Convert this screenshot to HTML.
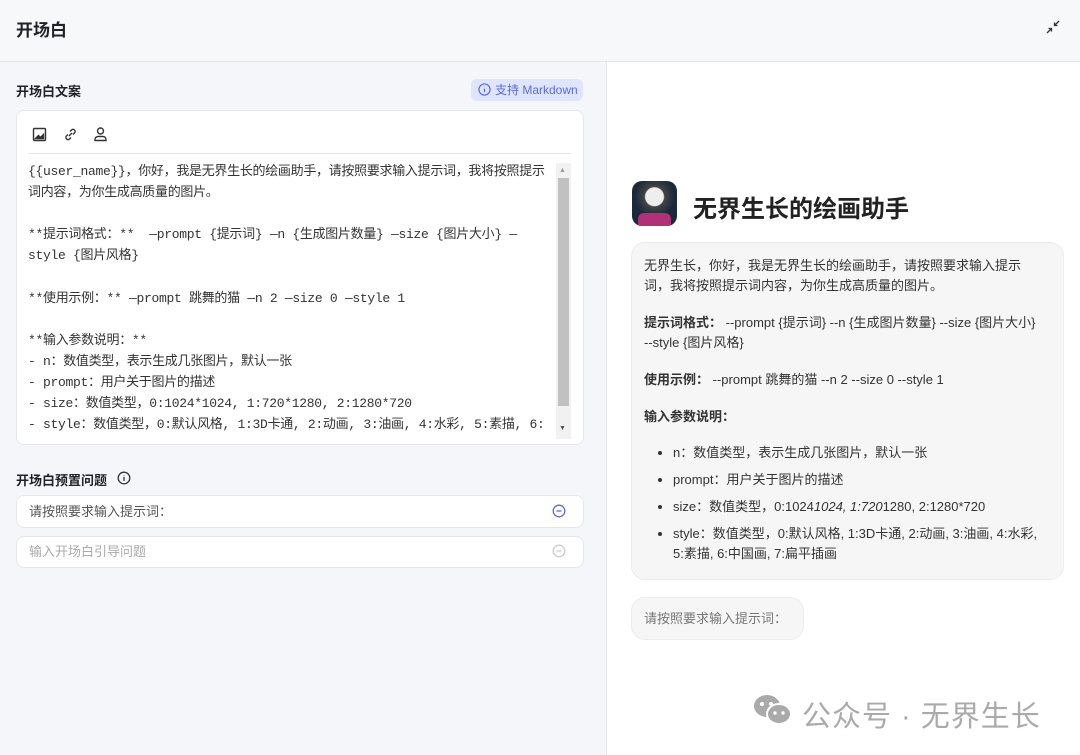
<!DOCTYPE html><html><head><meta charset="utf-8"><style>
*{box-sizing:border-box;margin:0;padding:0}
body{width:1080px;height:755px;overflow:hidden;font-family:"Liberation Sans","Noto Sans CJK SC",sans-serif;background:#fff;position:relative;color:#1f2329}
.hdr{position:absolute;left:0;top:0;width:1080px;height:62px;background:#f7f8fa;border-bottom:1px solid #e5e6eb}
.hdr h1{position:absolute;left:16px;top:16px;font-size:17px;font-weight:bold}
.left{position:absolute;left:0;top:62px;width:607px;height:693px;background:#f5f6f9;border-right:1px solid #e5e6eb}
.abs{position:absolute}
.lbl{font-size:13px;font-weight:bold;color:#1f2329}
.card{background:#fff;border:1px solid #e5e7eb;border-radius:8px}
.ta{position:absolute;left:28px;top:161px;width:518px;height:276px;overflow:hidden;font-family:"Liberation Mono","Noto Sans CJK SC",monospace;font-size:13px;line-height:21.1px;color:#333;white-space:pre-wrap;letter-spacing:-0.3px}
.bub{position:absolute;background:#f6f6f7;border:1px solid #ececee;border-radius:14px;font-size:13px;color:#333}
.bub p{line-height:20px}
</style></head><body>
<div class="hdr"><h1>开场白</h1>
<svg class="abs" style="left:1046px;top:20px" width="14" height="14" viewBox="0 0 14 14" fill="none" stroke="#333" stroke-width="1.3"><path d="M13 1L8.5 5.5M8.5 2.5V5.5H11.5M1 13L5.5 8.5M2.5 8.5H5.5V11.5"/></svg>
</div>
<div class="left"></div>
<div class="abs lbl" style="left:16px;top:81px">开场白文案</div>
<div class="abs" style="left:471px;top:79px;width:112px;height:22px;background:#e0e5fe;border-radius:6px;color:#5b6be0;font-size:12px;line-height:22px;padding-left:24px">支持 Markdown
<svg class="abs" style="left:7px;top:4px" width="13" height="13" viewBox="0 0 14 14" fill="none" stroke="#5b6be0" stroke-width="1.3"><circle cx="7" cy="7" r="6"/><path d="M7 6v4M7 4v.5"/></svg></div>
<div class="abs card" style="left:16px;top:110px;width:568px;height:335px"></div>
<svg class="abs" style="left:32px;top:127px" width="15" height="15" viewBox="0 0 15 15" fill="none" stroke="#333" stroke-width="1.4"><rect x="1.5" y="1.5" width="12" height="12" rx="1"/><path d="M3.5 11.5l3-3 2 2 3-3v4z" fill="#333"/></svg>
<svg class="abs" style="left:63px;top:127px" width="15" height="15" viewBox="0 0 15 15" fill="none" stroke="#333" stroke-width="1.4"><path d="M6 9l3-3M5 7.5l-1.5 1.5a2.1 2.1 0 003 3L8 10.5M10 7.5l1.5-1.5a2.1 2.1 0 00-3-3L7 4.5"/></svg>
<svg class="abs" style="left:93px;top:126px" width="15" height="16" viewBox="0 0 15 16" fill="none" stroke="#333" stroke-width="1.4"><circle cx="7.5" cy="5" r="3"/><path d="M2 14.5v-1a3 3 0 013-3h5a3 3 0 013 3v1z"/></svg>
<div class="abs" style="left:28px;top:153px;width:543px;height:1px;background:#e5e6eb"></div>
<div class="ta">{{user_name}}，你好，我是无界生长的绘画助手，请按照要求输入提示词，我将按照提示词内容，为你生成高质量的图片。

**提示词格式：**  —prompt {提示词} —n {生成图片数量} —size {图片大小} —style {图片风格}

**使用示例：** —prompt 跳舞的猫 —n 2 —size 0 —style 1

**输入参数说明：**
- n：数值类型，表示生成几张图片，默认一张
- prompt：用户关于图片的描述
- size：数值类型，0:1024*1024, 1:720*1280, 2:1280*720
- style：数值类型，0:默认风格, 1:3D卡通, 2:动画, 3:油画, 4:水彩, 5:素描, 6:中</div>
<div class="abs" style="left:556px;top:163px;width:15px;height:276px;background:#f1f1f1"></div>
<div class="abs" style="left:558px;top:178px;width:11px;height:228px;background:#c1c1c1"></div>
<div class="abs" style="left:559px;top:167px;font-size:7px;color:#999">▲</div>
<div class="abs" style="left:559px;top:425px;font-size:7px;color:#555">▼</div>
<div class="abs lbl" style="left:16px;top:470px">开场白预置问题</div>
<svg class="abs" style="left:117px;top:471px" width="14" height="14" viewBox="0 0 14 14" fill="none" stroke="#333" stroke-width="1.3"><circle cx="7" cy="7" r="5.8"/><path d="M7 6v4M7 4v.5"/></svg>
<div class="abs card" style="left:16px;top:495px;width:568px;height:33px;font-size:13px;color:#555;line-height:31px;padding-left:12px">请按照要求输入提示词：</div>
<svg class="abs" style="left:552px;top:504px" width="14" height="14" viewBox="0 0 14 14" fill="none" stroke="#5b6be0" stroke-width="1.3"><circle cx="7" cy="7" r="5.8"/><path d="M4.5 7h5"/></svg>
<div class="abs card" style="left:16px;top:536px;width:568px;height:32px;font-size:13px;color:#aaa;line-height:30px;padding-left:12px">输入开场白引导问题</div>
<svg class="abs" style="left:552px;top:544px" width="14" height="14" viewBox="0 0 14 14" fill="none" stroke="#ccc" stroke-width="1.3"><circle cx="7" cy="7" r="5.8"/><path d="M4.5 7h5"/></svg>

<div class="abs" style="left:632px;top:181px;width:45px;height:45px;border-radius:10px;background:radial-gradient(circle at 50% 35%,#eee 0 9px,#444 10px,#1a2a3a 20px);overflow:hidden"><div class="abs" style="left:6px;top:32px;width:33px;height:13px;background:#b0307a;border-radius:6px 6px 0 0"></div></div>
<div class="abs" style="left:693px;top:189px;font-size:24px;font-weight:bold;color:#222">无界生长的绘画助手</div>
<div class="bub" style="left:631px;top:242px;width:433px;height:338px;padding:13px 22px 0 12px">
<p>无界生长，你好，我是无界生长的绘画助手，请按照要求输入提示词，我将按照提示词内容，为你生成高质量的图片。</p>
<p style="margin-top:17px"><b>提示词格式：</b> --prompt {提示词} --n {生成图片数量} --size {图片大小} --style {图片风格}</p>
<p style="margin-top:17px"><b>使用示例：</b> --prompt 跳舞的猫 --n 2 --size 0 --style 1</p>
<p style="margin-top:17px"><b>输入参数说明：</b></p>
<ul style="margin-top:16px;padding-left:29px;line-height:20px">
<li>n：数值类型，表示生成几张图片，默认一张</li>
<li style="margin-top:7px">prompt：用户关于图片的描述</li>
<li style="margin-top:7px">size：数值类型，0:1024<i>1024, 1:720</i>1280, 2:1280*720</li>
<li style="margin-top:7px">style：数值类型，0:默认风格, 1:3D卡通, 2:动画, 3:油画, 4:水彩, 5:素描, 6:中国画, 7:扁平插画</li>
</ul></div>
<div class="bub" style="left:631px;top:597px;width:173px;height:43px;line-height:41px;padding-left:12px;color:#777">请按照要求输入提示词：</div>
<svg class="abs" style="left:752px;top:693px" width="42" height="34" viewBox="0 0 42 34"><ellipse cx="15" cy="13" rx="13" ry="11" fill="#aaa"/><ellipse cx="27" cy="21" rx="12" ry="10" fill="#aaa" stroke="#fff" stroke-width="2"/><circle cx="10" cy="11" r="2" fill="#fff"/><circle cx="19" cy="11" r="2" fill="#fff"/><circle cx="23" cy="20" r="1.7" fill="#fff"/><circle cx="31" cy="20" r="1.7" fill="#fff"/></svg>
<div class="abs" style="left:802px;top:693px;font-size:29px;color:#aaa;letter-spacing:1px">公众号 · 无界生长</div>
</body></html>
